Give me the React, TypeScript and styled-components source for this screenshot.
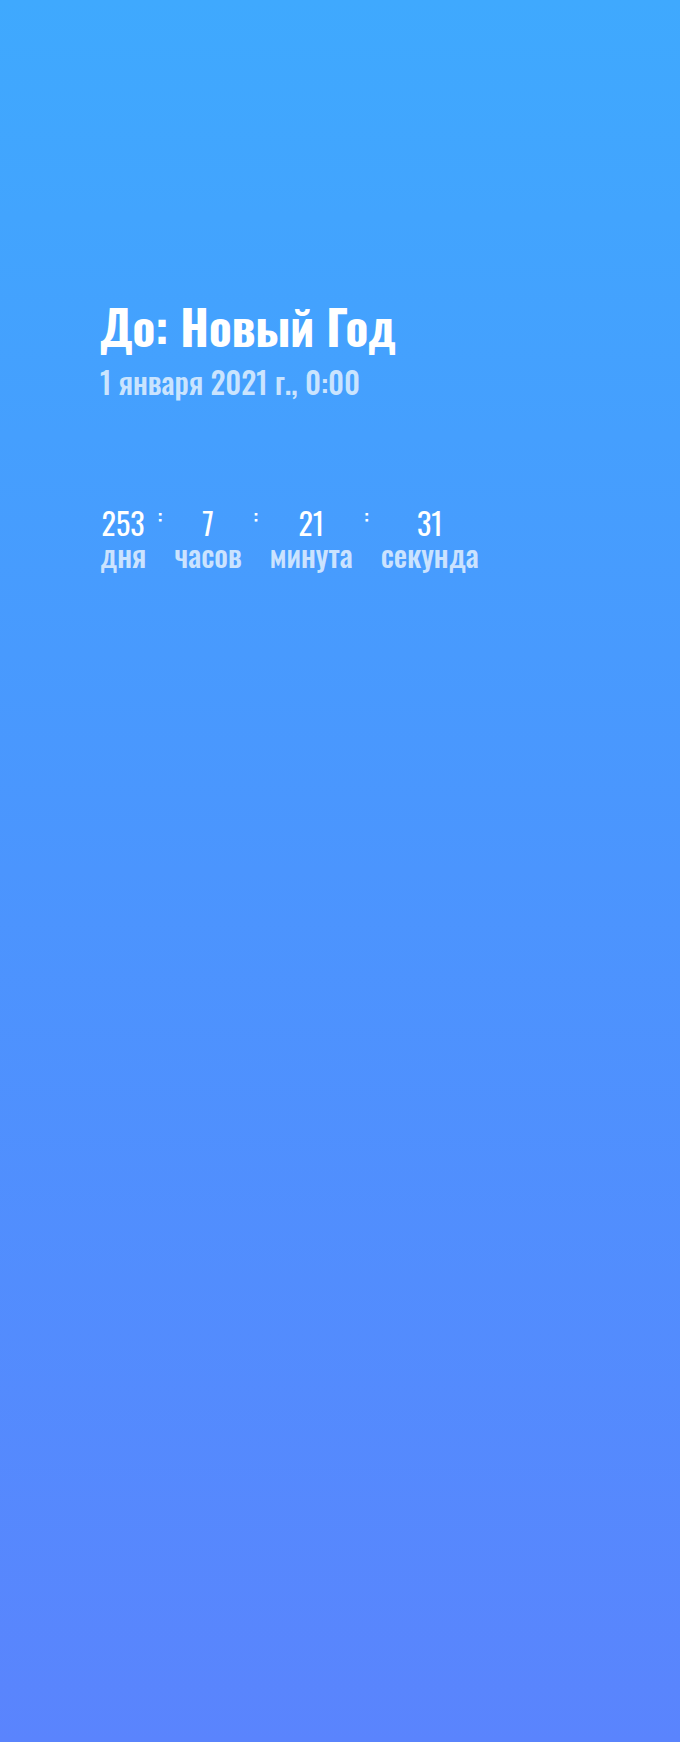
import React from "react";
import styled, { createGlobalStyle } from "styled-components";

const GlobalStyle = createGlobalStyle`
  html, body { margin: 0; padding: 0; }
  body { font-family: "Oswald", "Roboto Condensed", sans-serif; color: #fff; }
`;

const Page = styled.main`
  min-height: 1742px;
  box-sizing: border-box;
  background: linear-gradient(180deg, #3fa9fe 0%, #4b95fe 50%, #5a84fd 100%);
  padding: 296px 0 0 100px;
`;

const Header = styled.header`
  display: flex;
  flex-direction: column;
  gap: 8px;
`;

const Title = styled.h1`
  margin: 0;
  font-size: 47px;
  font-weight: 700;
  line-height: 60px;
`;

const Subtitle = styled.div`
  font-size: 30px;
  font-weight: 500;
  line-height: 36px;
  color: rgba(255, 255, 255, 0.72);
`;

const Counter = styled.section`
  display: flex;
  align-items: flex-start;
  margin-top: 106px;
`;

const Unit = styled.div`
  display: flex;
  flex-direction: column;
  align-items: center;
`;

const Value = styled.span`
  font-size: 30px;
  font-weight: 400;
  line-height: 34px;
`;

const Label = styled.span`
  font-size: 30px;
  font-weight: 500;
  line-height: 30px;
  color: rgba(255, 255, 255, 0.72);
`;

const Separator = styled.span`
  width: 28px;
  text-align: center;
  font-size: 17px;
  font-weight: 700;
  line-height: 20px;
`;

const units = [
  { value: "253", label: "дня" },
  { value: "7", label: "часов" },
  { value: "21", label: "минута" },
  { value: "31", label: "секунда" },
];

export default function App() {
  return (
    <>
      <GlobalStyle />
      <Page>
        <Header>
          <Title>До: Новый Год</Title>
          <Subtitle>1 января 2021 г., 0:00</Subtitle>
        </Header>
        <Counter>
          {units.map((u, i) => (
            <React.Fragment key={u.label}>
              {i > 0 && <Separator>:</Separator>}
              <Unit>
                <Value>{u.value}</Value>
                <Label>{u.label}</Label>
              </Unit>
            </React.Fragment>
          ))}
        </Counter>
      </Page>
    </>
  );
}
